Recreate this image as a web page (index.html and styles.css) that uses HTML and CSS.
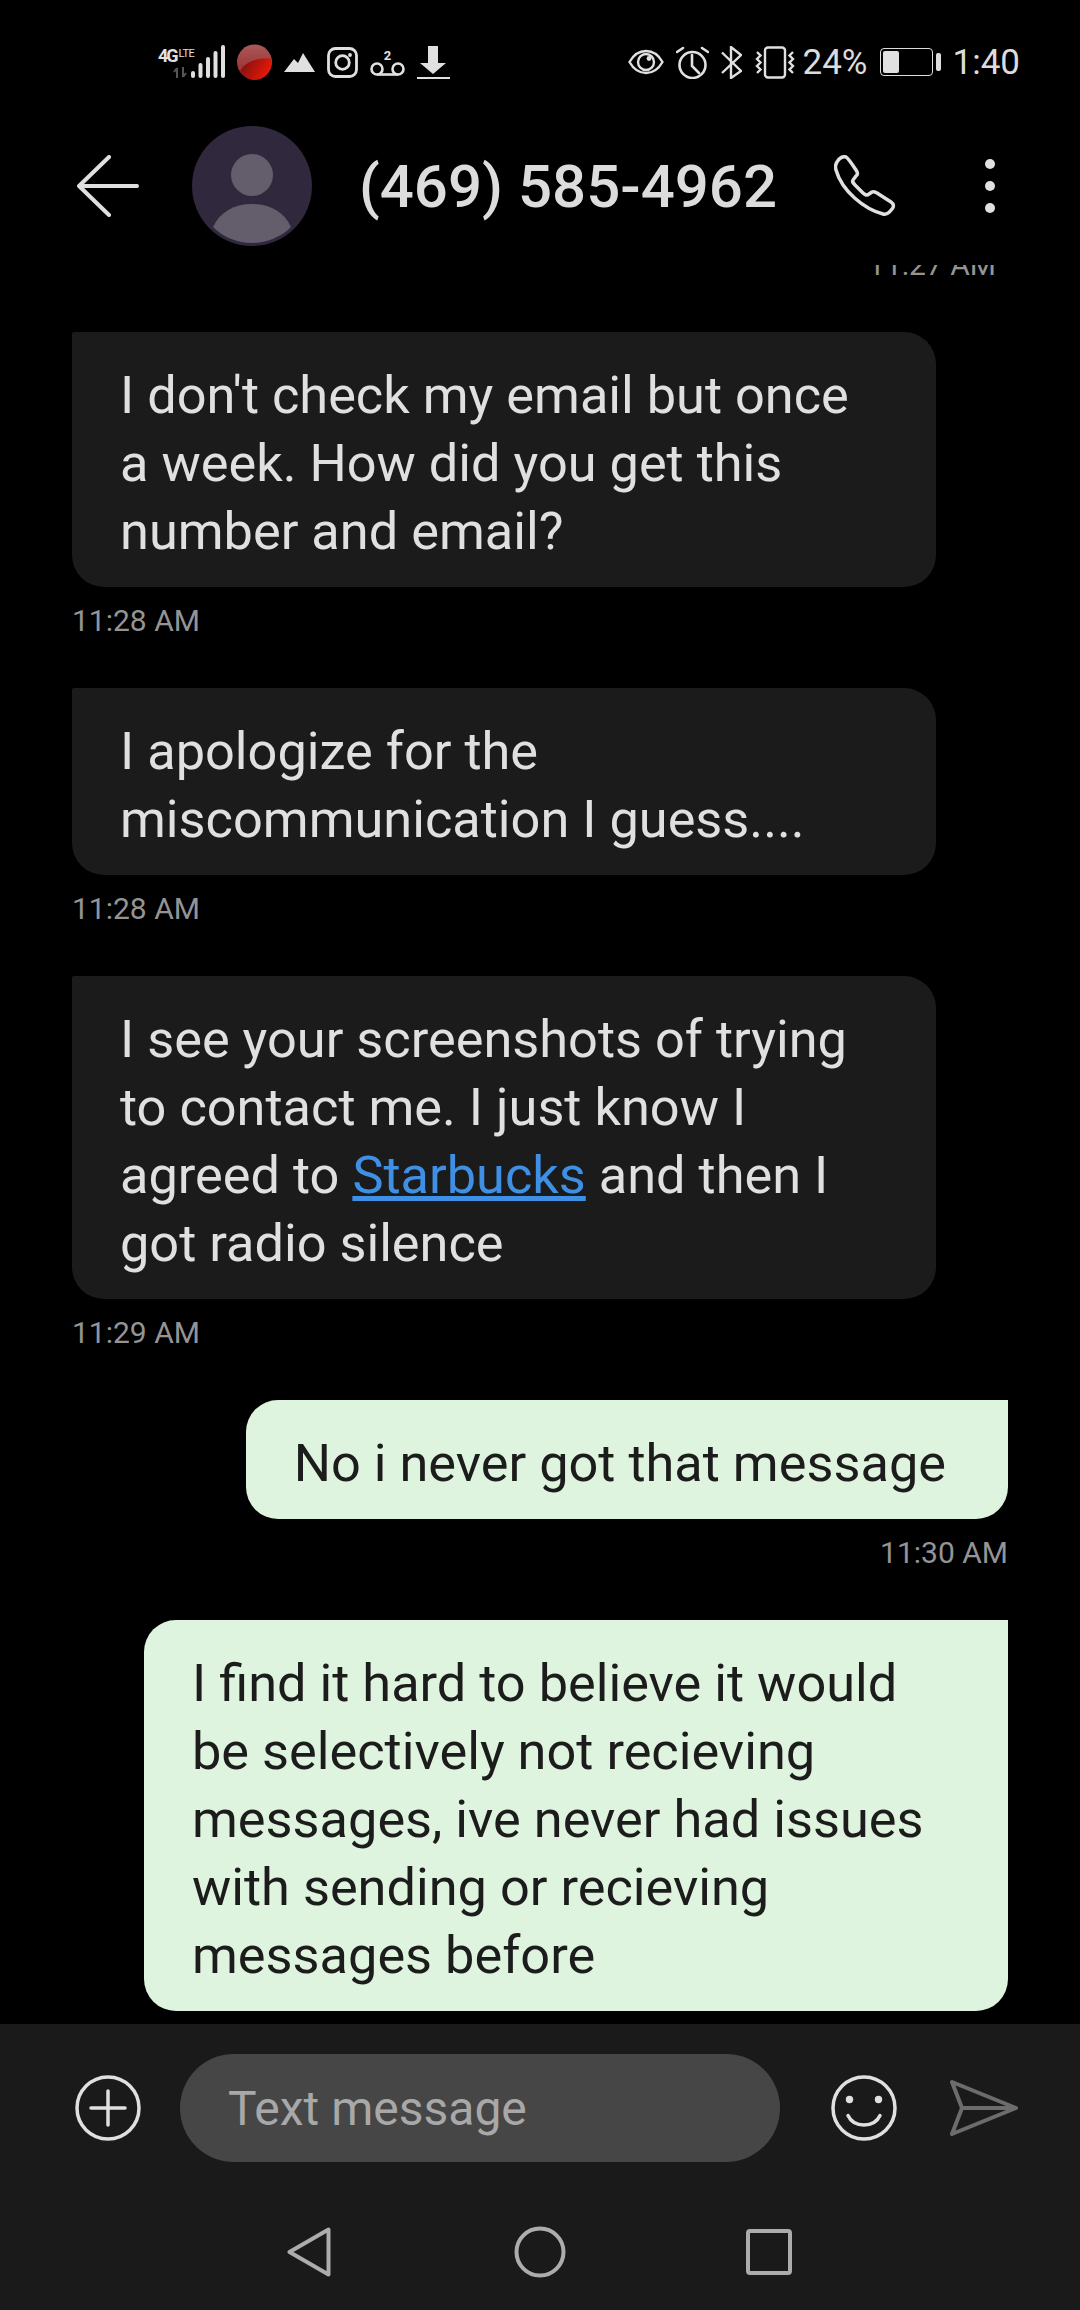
FILE: index.html
```html
<!DOCTYPE html>
<html lang="en">
<head>
    <meta charset="UTF-8">
    <meta name="viewport" content="width=device-width, initial-scale=1.0">
    <title>(469) 585-4962</title>
    <link rel="stylesheet" href="styles.css">
</head>
<body>
    <div class="status-bar">
        <div class="status-left">
            <div class="network">
                <span class="net-type">4G<small>LTE</small></span>
                <svg class="net-arrows" width="14" height="11" viewBox="0 0 14 11"><path d="M4 1v10M4 1 1 5M10 0v10M10 10l3-4" fill="none" stroke="#555" stroke-width="2"/></svg>
            </div>
            <svg class="signal" width="34" height="34" viewBox="0 0 34 34"><g fill="#e0e0e0"><rect x="0" y="26" width="4" height="7" rx="2"/><rect x="7.500" y="18" width="4" height="15" rx="2"/><rect x="15" y="12" width="4" height="21" rx="2"/><rect x="22.500" y="6" width="4" height="27" rx="2"/><rect x="30" y="0" width="4" height="33" rx="2"/></g></svg>
            <svg width="35" height="36" viewBox="0 0 35 36"><defs><linearGradient id="ball-top" x1="0" y1="0" x2="0" y2="1"><stop offset="0" stop-color="#a85a5a"/><stop offset="0.6" stop-color="#a03a3a"/></linearGradient><linearGradient id="ball-low" x1="0" y1="0" x2="1" y2="0.4"><stop offset="0" stop-color="#701010"/><stop offset="1" stop-color="#e81808"/></linearGradient></defs><circle cx="17.500" cy="18" r="17.500" fill="url(#ball-top)"/><path d="M3 27C8 18 20 13 34.500 15 36 27 28 36 17.500 36 11 36 6 32 3 27Z" fill="url(#ball-low)"/></svg>
            <svg width="31" height="19" viewBox="0 0 31 19"><path d="M0 19 10 6l4 4 5-10 12 19Z" fill="#e0e0e0"/></svg>
            <svg width="31" height="31" viewBox="0 0 31 31"><g fill="none" stroke="#e0e0e0" stroke-width="2.800"><rect x="1.500" y="1.500" width="28" height="28" rx="7"/><circle cx="15.500" cy="15.500" r="6.800"/></g><circle cx="23" cy="8" r="1.900" fill="#e0e0e0"/></svg>
            <svg width="35" height="27" viewBox="0 0 35 27"><g fill="none" stroke="#e0e0e0" stroke-width="2.600"><circle cx="7" cy="20" r="5.500"/><circle cx="28" cy="20" r="5.500"/><path d="M7 25.500h21"/></g><text x="17.500" y="11" class="vm-count">2</text></svg>
            <svg width="33" height="33" viewBox="0 0 33 33"><path d="M11 0h10v17h8L16 28 3 17h8Z" fill="#e0e0e0"/><path d="M0 32h33" stroke="#e0e0e0" stroke-width="2.200"/></svg>
        </div>
        <div class="status-right">
            <svg width="36" height="26" viewBox="0 0 36 26"><path d="M1.500 13C6 5 11 2 18 2s12 3 16.500 11C30 21 25 24 18 24S6 21 1.500 13Z" fill="none" stroke="#e0e0e0" stroke-width="2.400"/><circle cx="18" cy="13" r="8" fill="none" stroke="#e0e0e0" stroke-width="2.400"/><circle cx="21" cy="9.500" r="2.400" fill="#e0e0e0"/></svg>
            <svg width="33" height="33" viewBox="0 0 33 33"><circle cx="16.500" cy="19" r="13" fill="none" stroke="#e0e0e0" stroke-width="2.600"/><path d="M16 9v11l7 7M1 6l6-4M32 6l-6-4" fill="none" stroke="#e0e0e0" stroke-width="2.600" stroke-linecap="round"/></svg>
            <svg width="21" height="33" viewBox="0 0 21 33"><path d="M1 6.500 20 25l-10 7V1l10 8L1 27" fill="none" stroke="#e0e0e0" stroke-width="2.400"/></svg>
            <svg class="vibrate" width="42" height="33" viewBox="0 0 42 33"><rect x="11" y="1.500" width="20" height="30" rx="3" fill="none" stroke="#e0e0e0" stroke-width="2.400"/><path d="M3 6l3.500 3.500L3 13l3.500 3.500L3 20l3.500 3.500L3 27M39 6l-3.500 3.500L39 13l-3.500 3.500L39 20l-3.500 3.500L39 27" fill="none" stroke="#e0e0e0" stroke-width="2.400"/></svg>
            <span class="battery-pct">24%</span>
            <div class="battery"><div class="battery-body"><div class="battery-level"></div></div><div class="battery-tip"></div></div>
            <span class="clock">1:40</span>
        </div>
    </div>

    <header class="app-bar">
        <svg width="62" height="62" viewBox="0 0 62 62"><path d="M2 31h58M32 2 2 31l30 29" fill="none" stroke="#e0e0e0" stroke-width="4" stroke-linecap="round" stroke-linejoin="round"/></svg>
        <svg class="avatar" width="120" height="120" viewBox="0 0 120 120"><circle cx="60" cy="60" r="60" fill="#30283c"/><circle cx="60" cy="49" r="21" fill="#645e6c"/><path d="M21 101C28 86 42 78 60 78s32 8 39 23C89 111 75 117 60 117S31 111 21 101Z" fill="#645e6c"/></svg>
        <h1 class="contact-name">(469) 585-4962</h1>
        <svg width="62" height="62" viewBox="0 0 62 62"><path d="M3 7C5 3 9 1 12 2 14 3 16 6 22 15 24 18 24 19 22 21L19 25C18 27 19 28 21 30L29 38C31 40 33 41 35 39L38 37C40 36 41 37 43 38L57 47C60 49 60 52 58 54 55 58 52 60 49 59 30 54 8 36 2 15 1 12 1 10 3 7Z" fill="none" stroke="#e0e0e0" stroke-width="3.500" stroke-linejoin="round"/></svg>
        <div class="more"><span></span><span></span><span></span></div>
    </header>

    <main class="thread">
        <div class="clipped-time">11:27 AM</div>

        <div class="msg in">
            <div class="bubble">I don't check my email but once a week. How did you get this number and email?</div>
            <div class="time">11:28 AM</div>
        </div>
        <div class="msg in">
            <div class="bubble">I apologize for the miscommunication I guess....</div>
            <div class="time">11:28 AM</div>
        </div>
        <div class="msg in">
            <div class="bubble">I see your screenshots of trying to contact me. I just know I agreed to <a href="#">Starbucks</a> and then I got radio silence</div>
            <div class="time">11:29 AM</div>
        </div>
        <div class="msg out">
            <div class="bubble">No i never got that message</div>
            <div class="time">11:30 AM</div>
        </div>
        <div class="msg out">
            <div class="bubble">I find it hard to believe it would be selectively not recieving messages, ive never had issues with sending or recieving messages before</div>
        </div>
    </main>

    <div class="composer">
        <svg width="66" height="66" viewBox="0 0 66 66"><circle cx="33" cy="33" r="31" fill="none" stroke="#e0e0e0" stroke-width="3.500"/><path d="M33 16v34M16 33h34" fill="none" stroke="#e0e0e0" stroke-width="3.500" stroke-linecap="round"/></svg>
        <div class="input">Text message</div>
        <svg class="smile" width="66" height="66" viewBox="0 0 66 66"><circle cx="33" cy="33" r="31" fill="none" stroke="#e0e0e0" stroke-width="3.500"/><circle cx="18.500" cy="24.500" r="3.700" fill="#e0e0e0"/><circle cx="47.500" cy="24.500" r="3.700" fill="#e0e0e0"/><path d="M17 40.500C20 47 26 50 33 50S46 47 49 40.500" fill="none" stroke="#e0e0e0" stroke-width="3.500" stroke-linecap="round"/></svg>
        <svg class="send" width="68" height="56" viewBox="0 0 68 56"><path d="M2 2 66 28 2 54 12 28ZM12 28H66" fill="none" stroke="#6c6c6c" stroke-width="4" stroke-linejoin="round"/></svg>
    </div>

    <nav class="nav-bar">
        <svg width="44" height="50" viewBox="0 0 44 50"><path d="M41.500 2.500v45L2.500 25Z" fill="none" stroke="#acacac" stroke-width="4" stroke-linejoin="round"/></svg>
        <svg width="52" height="52" viewBox="0 0 52 52"><circle cx="26" cy="26" r="23.500" fill="none" stroke="#acacac" stroke-width="4"/></svg>
        <svg class="nav-square" width="46" height="46" viewBox="0 0 46 46"><rect x="2" y="2" width="42" height="42" rx="2" fill="none" stroke="#acacac" stroke-width="4"/></svg>
    </nav>
</body>
</html>
```

FILE: styles.css
```css
body {
    margin: 0;
    width: 1080px;
    height: 2310px;
    display: flex;
    flex-direction: column;
    overflow: hidden;
    background-color: #000;
    color: #e0e0e0;
    font-family: "Roboto", "Liberation Sans", sans-serif;
}

/* status bar */
.status-bar {
    height: 100px;
    flex-shrink: 0;
    display: flex;
    justify-content: space-between;
    align-items: center;
    padding: 24px 60px 0 158px;
    box-sizing: border-box;
}
.status-left, .status-right {
    display: flex;
    align-items: center;
    gap: 12px;
}
.network {
    display: flex;
    flex-direction: column;
    align-items: flex-end;
    width: 35px;
    margin-right: -14px;
}
.net-type {
    align-self: flex-start;
    font-size: 18px;
    font-weight: 700;
    line-height: 20px;
    letter-spacing: -2px;
    white-space: nowrap;
}
.net-type small {
    margin-left: 2px;
    font-size: 11px;
    font-weight: 400;
    letter-spacing: -0.5px;
    vertical-align: top;
    line-height: 15px;
}
.net-arrows {
    margin: 1px 6px 0 0;
}
.vm-count {
    font-size: 13px;
    font-weight: 700;
    text-anchor: middle;
    fill: #e0e0e0;
}
.vibrate {
    margin-right: -5px;
}
.battery-pct, .clock {
    font-size: 35px;
    line-height: 42px;
    padding-top: 2px;
    color: #dcdcdc;
}
.battery {
    display: flex;
    align-items: center;
    gap: 3px;
}
.battery-body {
    width: 53px;
    height: 28px;
    border: 1.5px solid #dcdcdc;
    border-radius: 4px;
    padding: 2px;
    box-sizing: border-box;
}
.battery-level {
    width: 16px;
    height: 100%;
    background-color: #e0e0e0;
    border-radius: 2px;
}
.battery-tip {
    width: 5px;
    height: 18px;
    background-color: #dcdcdc;
    border-radius: 2px;
}

/* app bar */
.app-bar {
    height: 165px;
    flex-shrink: 0;
    display: flex;
    align-items: center;
    padding: 7px 0 0 77px;
    box-sizing: border-box;
}
.avatar {
    margin-left: 53px;
}
.contact-name {
    margin: 0 0 0 47px;
    width: 475px;
    font-size: 60px;
    font-weight: 500;
    color: #dcdcdc;
    white-space: nowrap;
}
.more {
    margin-left: 89px;
    display: flex;
    flex-direction: column;
    gap: 12px;
}
.more span {
    width: 10px;
    height: 10px;
    background-color: #e0e0e0;
    border-radius: 50%;
}

/* messages */
.thread {
    flex: 1;
    min-height: 0;
    overflow: hidden;
    padding: 0 72px;
    display: flex;
    flex-direction: column;
}
.clipped-time {
    flex-shrink: 0;
    height: 17px;
    line-height: 0;
    text-align: right;
    padding-right: 12px;
    font-size: 30px;
    color: #949494;
}
.msg {
    flex-shrink: 0;
    display: flex;
    flex-direction: column;
    margin-top: 50px;
}
.bubble {
    font-size: 52.3px;
    line-height: 68px;
    padding: 29px 62px 22px 48px;
    box-sizing: border-box;
    border-radius: 32px;
}
.time {
    font-size: 30px;
    line-height: 34px;
    margin-top: 17px;
    color: #949494;
}
.in .bubble {
    width: 864px;
    background-color: #1b1b1b;
    color: #e0e0e0;
    border-top-left-radius: 2px;
}
.in .bubble a {
    color: #3f8fe4;
}
.out {
    align-items: flex-end;
}
.out .bubble {
    background-color: #def4de;
    color: #1c1c1c;
    border-top-right-radius: 0;
    max-width: 864px;
}

/* composer */
.composer {
    height: 168px;
    flex-shrink: 0;
    background-color: #1a1a1a;
    display: flex;
    align-items: center;
    padding-left: 75px;
    box-sizing: border-box;
}
.input {
    margin-left: 39px;
    width: 600px;
    height: 108px;
    line-height: 110px;
    padding-left: 48px;
    box-sizing: border-box;
    border-radius: 54px;
    background-color: #464646;
    color: #a8a8a8;
    font-size: 48px;
}
.smile {
    margin-left: 51px;
}
.send {
    margin-left: 53px;
}

/* nav bar */
.nav-bar {
    height: 118px;
    flex-shrink: 0;
    background-color: #1a1a1a;
    display: flex;
    align-items: center;
    padding: 2px 0 0 287px;
    box-sizing: border-box;
    gap: 183px;
}
.nav-square {
    margin-left: -3px;
}
```
